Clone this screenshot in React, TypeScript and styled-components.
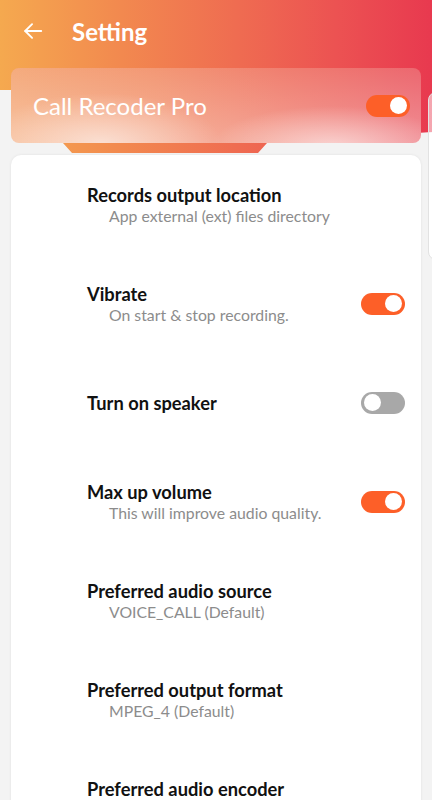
import React, { useState } from 'react';
import styled, { createGlobalStyle } from 'styled-components';

interface Setting {
    title: string;
    subtitle?: string;
    toggle?: boolean;
}

const settings: Setting[] = [
    { title: 'Records output location', subtitle: 'App external (ext) files directory' },
    { title: 'Vibrate', subtitle: 'On start & stop recording.', toggle: true },
    { title: 'Turn on speaker', toggle: false },
    { title: 'Max up volume', subtitle: 'This will improve audio quality.', toggle: true },
    { title: 'Preferred audio source', subtitle: 'VOICE_CALL (Default)' },
    { title: 'Preferred output format', subtitle: 'MPEG_4 (Default)' },
    { title: 'Preferred audio encoder', subtitle: 'AMR_NB (Default)' },
];

const App = () => {
    const [pro, setPro] = useState(true);
    const [values, setValues] = useState<boolean[]>(settings.map(s => !!s.toggle));

    const flip = (i: number) => {
        setValues(values.map((v, j) => (j === i ? !v : v)));
    };

    return (
        <React.Fragment>
            <GlobalStyle />
            <Page>
                <Header>
                    <TopBar>
                        <BackButton aria-label="Back">
                            <svg width="22" height="22" viewBox="0 0 24 24" fill="none" stroke="#fff" strokeWidth="2" strokeLinecap="round" strokeLinejoin="round">
                                <path d="M21 12H3.5" />
                                <path d="M11 4.5L3.5 12l7.5 7.5" />
                            </svg>
                        </BackButton>
                        <PageTitle>Setting</PageTitle>
                    </TopBar>
                    <ProCard>
                        <ProLabel>Call Recoder Pro</ProLabel>
                        <Switch $on={pro} onClick={() => setPro(!pro)}>
                            <Thumb $on={pro} />
                        </Switch>
                    </ProCard>
                </Header>
                <NextPage />
                <List>
                    {settings.map((s, i) => (
                        <Row key={s.title}>
                            <RowText>
                                <RowTitle>{s.title}</RowTitle>
                                {s.subtitle && <RowSub>{s.subtitle}</RowSub>}
                            </RowText>
                            {s.toggle !== undefined && (
                                <Switch $on={values[i]} onClick={() => flip(i)}>
                                    <Thumb $on={values[i]} />
                                </Switch>
                            )}
                        </Row>
                    ))}
                </List>
            </Page>
        </React.Fragment>
    );
};

const GlobalStyle = createGlobalStyle`
    html, body {
        margin: 0;
        padding: 0;
        background: #f3f3f3;
        font-family: 'Lato', 'Noto Sans', sans-serif;
    }
    * {
        box-sizing: border-box;
    }
`;

const Page = styled.div`
    position: relative;
    width: 432px;
    height: 800px;
    overflow: hidden;
    background: #f3f3f3;
`;

const Header = styled.header`
    position: relative;
    height: 155px;
    display: flex;
    flex-direction: column;
    &::before {
        content: '';
        position: absolute;
        inset: 0;
        background: linear-gradient(90deg, #f5a94f 0%, #f2894f 28%, #ef6c51 55%, #ec5252 78%, #e8394f 100%);
        clip-path: polygon(0 0, 100% 0, 100% 132px, 267px 143px, 258px 153px, 72px 153px, 63px 143px, 11px 90px, 0 90px);
    }
`;

const TopBar = styled.div`
    position: relative;
    height: 68px;
    display: flex;
    align-items: center;
    padding: 0 0 6px 20px;
`;

const BackButton = styled.button`
    background: none;
    border: none;
    padding: 0;
    width: 26px;
    height: 26px;
    display: flex;
    align-items: center;
    justify-content: center;
    cursor: pointer;
`;

const PageTitle = styled.h1`
    margin: 0 0 0 26px;
    font-size: 24px;
    font-weight: 700;
    color: #fff;
`;

const ProCard = styled.div`
    position: relative;
    margin: 0 11px;
    height: 75px;
    border-radius: 8px;
    display: flex;
    align-items: center;
    justify-content: space-between;
    padding: 0 11px 0 22px;
    background:
        radial-gradient(ellipse 120px 50px at 90px 75px, rgba(255, 255, 255, 0.55), rgba(255, 255, 255, 0)),
        radial-gradient(ellipse 120px 40px at 320px 78px, rgba(255, 255, 255, 0.55), rgba(255, 255, 255, 0)),
        linear-gradient(180deg, rgba(255, 255, 255, 0.12) 0%, rgba(255, 255, 255, 0.35) 100%),
        linear-gradient(90deg, #f3a06c 0%, #f18a62 35%, #ee6e5c 65%, #e9525c 100%);
`;

const ProLabel = styled.span`
    font-size: 24px;
    color: #fff;
`;

const NextPage = styled.div`
    position: absolute;
    top: 92px;
    left: 428px;
    width: 20px;
    height: 168px;
    border-radius: 8px;
    border: 1px solid #e2e2e2;
    background: linear-gradient(180deg, rgba(255, 255, 255, 0.55) 0, rgba(255, 255, 255, 0.55) 40px, #fff 40px);
`;

const List = styled.section`
    margin: 0 11px;
    background: #fff;
    border-radius: 10px;
    box-shadow: 0 0 3px rgba(0, 0, 0, 0.08);
`;

const Row = styled.div`
    height: 99px;
    display: flex;
    align-items: center;
    justify-content: space-between;
    padding: 0 16px 0 76px;
`;

const RowText = styled.div`
    display: flex;
    flex-direction: column;
`;

const RowTitle = styled.div`
    font-size: 18.3px;
    font-weight: 700;
    color: #111;
    line-height: 22px;
`;

const RowSub = styled.div`
    font-size: 15.8px;
    color: #8c8c8c;
    line-height: 19px;
    padding-left: 22px;
`;

const Switch = styled.button<{ $on: boolean }>`
    width: 44px;
    height: 22px;
    border-radius: 11px;
    border: none;
    padding: 0 3px;
    display: flex;
    align-items: center;
    justify-content: ${p => (p.$on ? 'flex-end' : 'flex-start')};
    background: ${p => (p.$on ? '#fd5f28' : '#a8a8a8')};
    cursor: pointer;
    flex-shrink: 0;
`;

const Thumb = styled.span<{ $on: boolean }>`
    width: 17px;
    height: 17px;
    border-radius: 50%;
    background: #fff;
`;

export default App;
